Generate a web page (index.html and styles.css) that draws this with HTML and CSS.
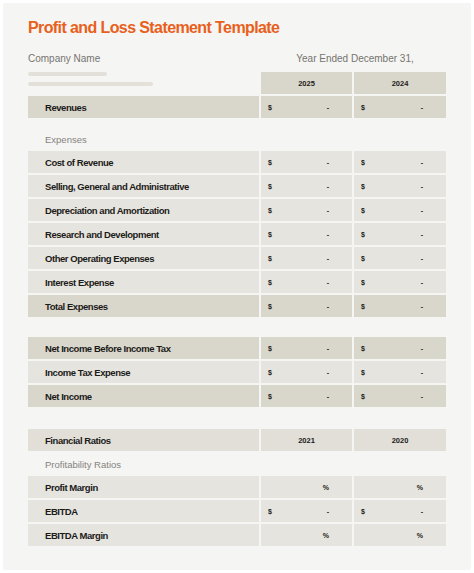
FILE: index.html
```html
<!DOCTYPE html>
<html>
<head>
<meta charset="utf-8">
<link rel="stylesheet" href="styles.css">
</head>
<body>
<div class="card">
  <h1 class="title">Profit and Loss Statement Template</h1>
  <div class="grid head">
    <div class="company">Company Name</div>
    <div class="year-ended">Year Ended December 31,</div>
    <div class="bars"><span class="bar b1"></span><span class="bar b2"></span></div>
    <div class="cell dark year">2025</div>
    <div class="cell dark year">2024</div>
    <div class="cell dark label">Revenues</div>
    <div class="cell dark val"><span>$</span><span>-</span></div>
    <div class="cell dark val"><span>$</span><span>-</span></div>
  </div>

  <div class="section-label">Expenses</div>
  <div class="grid">
    <div class="cell label">Cost of Revenue</div>
    <div class="cell val"><span>$</span><span>-</span></div>
    <div class="cell val"><span>$</span><span>-</span></div>
    <div class="cell label">Selling, General and Administrative</div>
    <div class="cell val"><span>$</span><span>-</span></div>
    <div class="cell val"><span>$</span><span>-</span></div>
    <div class="cell label">Depreciation and Amortization</div>
    <div class="cell val"><span>$</span><span>-</span></div>
    <div class="cell val"><span>$</span><span>-</span></div>
    <div class="cell label">Research and Development</div>
    <div class="cell val"><span>$</span><span>-</span></div>
    <div class="cell val"><span>$</span><span>-</span></div>
    <div class="cell label">Other Operating Expenses</div>
    <div class="cell val"><span>$</span><span>-</span></div>
    <div class="cell val"><span>$</span><span>-</span></div>
    <div class="cell label">Interest Expense</div>
    <div class="cell val"><span>$</span><span>-</span></div>
    <div class="cell val"><span>$</span><span>-</span></div>
    <div class="cell dark label">Total Expenses</div>
    <div class="cell dark val"><span>$</span><span>-</span></div>
    <div class="cell dark val"><span>$</span><span>-</span></div>
  </div>

  <div class="grid net">
    <div class="cell dark label">Net Income Before Income Tax</div>
    <div class="cell dark val"><span>$</span><span>-</span></div>
    <div class="cell dark val"><span>$</span><span>-</span></div>
    <div class="cell label">Income Tax Expense</div>
    <div class="cell val"><span>$</span><span>-</span></div>
    <div class="cell val"><span>$</span><span>-</span></div>
    <div class="cell dark label">Net Income</div>
    <div class="cell dark val"><span>$</span><span>-</span></div>
    <div class="cell dark val"><span>$</span><span>-</span></div>
  </div>

  <div class="grid ratios">
    <div class="cell label mid">Financial Ratios</div>
    <div class="cell mid year">2021</div>
    <div class="cell mid year">2020</div>
  </div>
  <div class="section-label ratio-label">Profitability Ratios</div>
  <div class="grid">
    <div class="cell label">Profit Margin</div>
    <div class="cell val pct"><span>%</span></div>
    <div class="cell val pct"><span>%</span></div>
    <div class="cell label">EBITDA</div>
    <div class="cell val"><span>$</span><span>-</span></div>
    <div class="cell val"><span>$</span><span>-</span></div>
    <div class="cell label">EBITDA Margin</div>
    <div class="cell val pct"><span>%</span></div>
    <div class="cell val pct"><span>%</span></div>
  </div>
</div>
</body>
</html>
```

FILE: styles.css
```css
* { box-sizing: border-box; }
html, body { margin: 0; padding: 0; background: #ffffff; }
body {
  font-family: "Liberation Sans", Arial, sans-serif;
  color: #1c1b19;
  padding: 3px;
}
.card {
  background: #f5f5f3;
  height: 567px;
  padding: 15px 25px 0 25px;
  border-radius: 2px;
}
.title {
  margin: 0;
  font-size: 16px;
  line-height: 20px;
  font-weight: 700;
  letter-spacing: -0.6px;
  color: #e8601c;
}
.grid {
  display: grid;
  grid-template-columns: 231px 91px 92px;
  column-gap: 2px;
  row-gap: 2px;
}
.head {
  margin-top: 14px;
  grid-template-rows: 18px 22px 22px;
}
.head .company, .head .year-ended {
  font-size: 10px;
  line-height: 14px;
  color: #76746f;
}
.head .company { grid-column: 1; }
.head .year-ended { grid-column: 2 / 4; text-align: center; padding-left: 3px; }
.head .bars { display: flex; flex-direction: column; gap: 6px; }
.bar { display: block; height: 4px; border-radius: 2px; background: #e2e0d9; }
.b1 { width: 79px; }
.b2 { width: 125px; }
.cell {
  height: 22px;
  background: #e6e4de;
  display: flex;
  align-items: center;
}
.cell.dark { background: #d9d6cb; }
.cell.mid { background: #e1dfd7; }
.label {
  padding-left: 17px;
  font-size: 9.5px;
  font-weight: 700;
  letter-spacing: -0.45px;
  color: #1c1b19;
}
.year {
  justify-content: center;
  font-size: 7.5px;
  font-weight: 700;
}
.val {
  justify-content: space-between;
  padding: 0 23px 0 7px;
  font-size: 7px;
  font-weight: 700;
}
.val.pct { justify-content: flex-end; }
.section-label {
  margin: 11px 0 0 17px;
  height: 22px;
  line-height: 22px;
  font-size: 9.5px;
  color: #85837e;
}
.net { margin-top: 20px; }
.ratios { margin-top: 22px; }
.ratio-label { margin-top: 3px; }
```
